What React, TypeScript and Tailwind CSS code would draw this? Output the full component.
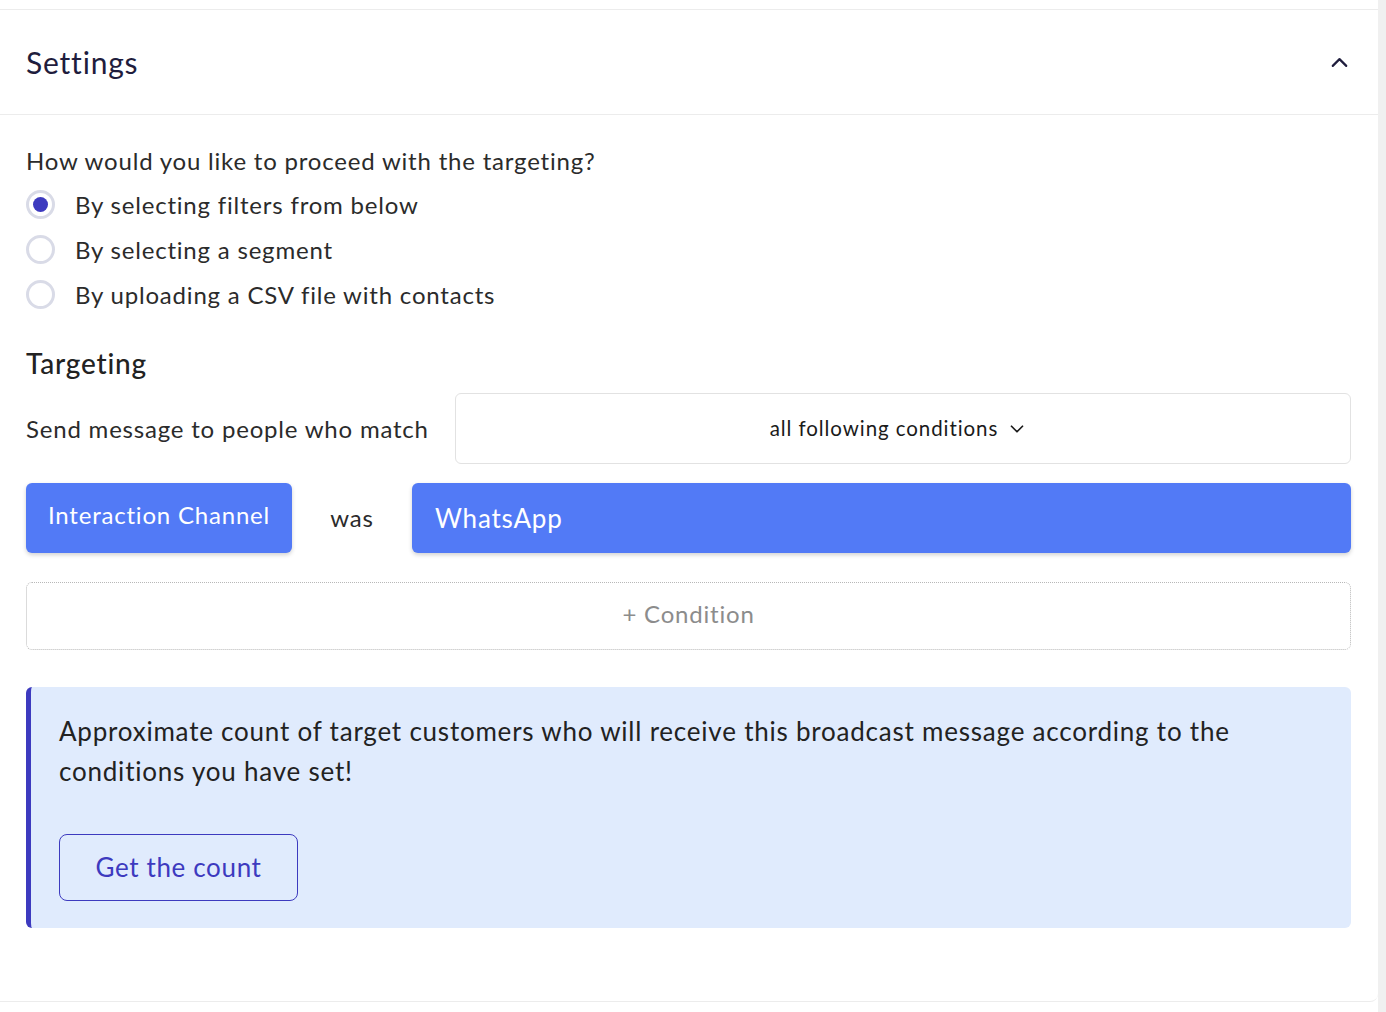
import { ChevronUp, ChevronDown } from "lucide-react";

const OPCOES = [
  "By selecting filters from below",
  "By selecting a segment",
  "By uploading a CSV file with contacts",
];

function Radio({ ativo, label }: { ativo: boolean; label: string }) {
  return (
    <label className="flex items-center h-[45px] cursor-pointer">
      <span className="w-[29px] h-[29px] rounded-full border-[3px] border-[#d9dbe7] bg-white flex items-center justify-center">
        {ativo && <span className="w-[15px] h-[15px] rounded-full bg-[#3d3abf]" />}
      </span>
      <span className="ml-[20px] text-[24px] text-[#2b2b2b]">{label}</span>
    </label>
  );
}

export default function App() {
  return (
    <div className="min-h-screen bg-white font-['Lato','Noto_Sans',sans-serif] tracking-[0.05em] text-[#222]">
      <div className="flex">
        <div className="flex-1">
          <div className="h-[10px] border-b border-[#ececec]" />
          <div className="bg-white rounded-tr-lg rounded-br-lg border-b border-[#ececec] h-[992px]">
            {/* Header */}
            <div className="h-[105px] pl-[26px] pr-[27px] flex items-center justify-between border-b border-[#ececec]">
              <h2 className="text-[30px] text-[#1f1d3d]">Settings</h2>
              <ChevronUp size={27} strokeWidth={1.9} className="text-[#1f1d3d] mr-[-2px]" />
            </div>

            <div className="pl-[26px] pr-[27px] pt-[28px]">
              <p className="text-[24px] text-[#2b2b2b] leading-[36px]">How would you like to proceed with the targeting?</p>
              <div className="mt-[3px]">
                {OPCOES.map((o, i) => (
                  <Radio key={o} ativo={i === 0} label={o} />
                ))}
              </div>

              <h3 className="mt-[28px] text-[28px] font-medium text-[#222] leading-[36px]">Targeting</h3>

              <div className="mt-[12px] flex items-center">
                <span className="text-[24px] text-[#2b2b2b] w-[429px] shrink-0">Send message to people who match</span>
                <button className="flex-1 h-[71px] border border-[#e2e2e2] rounded-md bg-white flex items-center justify-center gap-[8px] pr-[8px]">
                  <span className="text-[20.5px] text-[#1a1a1a] tracking-[0.045em]">all following conditions</span>
                  <ChevronDown size={22} strokeWidth={1.9} className="text-[#1a1a1a]" />
                </button>
              </div>

              <div className="mt-[19px] flex items-center h-[70px]">
                <div className="w-[266px] h-full rounded-md bg-[#527af6] shadow-[0_2px_4px_rgba(0,0,0,0.18)] flex items-center justify-center text-white text-[24px] pb-[6px]">
                  Interaction Channel
                </div>
                <span className="w-[120px] text-center text-[24px] text-[#2b2b2b]">was</span>
                <div className="flex-1 h-full rounded-md bg-[#527af6] shadow-[0_2px_4px_rgba(0,0,0,0.18)] flex items-center px-[23px] text-white text-[26px]">
                  WhatsApp
                </div>
              </div>

              <button className="mt-[29px] w-full h-[68px] border border-dotted border-[#b8b8b8] rounded-md text-[24px] text-[#8c8c8c] pb-[4px]">
                + Condition
              </button>

              <div className="mt-[37px] h-[241px] rounded-md bg-[#e0ebfd] border-l-[5px] border-[#3d3abf] pl-[28px] pr-[40px] pt-[24px]">
                <p className="text-[26px] leading-[40px] text-[#222] tracking-[0.03em]">
                  Approximate count of target customers who will receive this broadcast message according to the conditions you have set!
                </p>
                <button className="mt-[43px] w-[239px] h-[67px] rounded-lg border border-[#3d3abf] text-[#3d3abf] text-[26px] tracking-[0.025em]">
                  Get the count
                </button>
              </div>
            </div>
          </div>
          <div className="h-[12px] bg-white rounded-tr-lg" />
        </div>
        <div className="w-[8px] bg-[#f0f0f0] shrink-0" />
      </div>
    </div>
  );
}
